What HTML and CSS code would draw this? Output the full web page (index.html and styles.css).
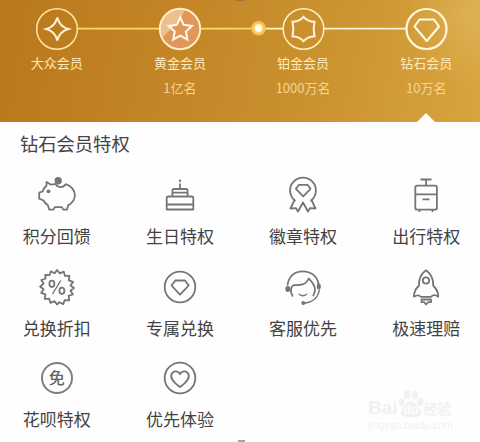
FILE: index.html
```html
<!DOCTYPE html>
<html lang="zh-CN">
<head>
<meta charset="utf-8">
<title>钻石会员特权</title>
<link rel="stylesheet" href="styles.css">
</head>
<body>
<header class="hero">
  <svg class="track" viewBox="0 0 480 52" width="480" height="52" fill="none">
    <path d="M235 0h10" stroke="#8b7142" stroke-width="1.5"/>
    <path d="M78 28.700h81M201 28.700h51" stroke="#ffd866" stroke-width="1.800"/>
    <path d="M265 28.700h18M324 28.700h82" stroke="#fff3cf" stroke-width="1.800"/>
    <circle cx="57" cy="29" r="20.300" stroke="#ffe5a0" stroke-width="1.500"/>
    <path d="M57.300 17.500Q59.600 26.700 68.300 29Q59.600 31.300 57.300 40.500Q55 31.300 46.300 29Q55 26.700 57.300 17.500Z" stroke="#fff4d8" stroke-width="2"/>
    <circle cx="180" cy="29" r="20.300" fill="#e2975a"/>
    <path d="M160 31A20.300 20.300 0 0 1 186 9.500L176 24L163 37Z" fill="#edc08e"/>
    <circle cx="180" cy="29" r="20.200" stroke="#fff0c8" stroke-width="1.900"/>
    <path d="M180.300 17.500l3.400 7.400 8.200 1-6 5.600 1.500 8.100-7.100-4-7.100 4 1.500-8.100-6-5.600 8.200-1Z" stroke="#fff8e8" stroke-width="2.100"/>
    <circle cx="258.500" cy="28.300" r="7.300" fill="#f8c548"/>
    <circle cx="258.500" cy="28.300" r="4.500" fill="#ffe9a5"/>
    <circle cx="258.500" cy="28.300" r="3.200" fill="#fffdf0"/>
    <circle cx="303.500" cy="29" r="20.300" stroke="#fff0c4" stroke-width="1.500"/>
    <path d="M303.500 16.800Q307.500 21.500 314.500 21.800Q312.800 29 314.500 36.200Q307.500 36.500 303.500 41.200Q299.500 36.500 292.500 36.200Q294.200 29 292.500 21.800Q299.500 21.500 303.500 16.800Z" stroke="#fff5db" stroke-width="2"/>
    <circle cx="426.500" cy="29" r="20" stroke="#fff6dc" stroke-width="2.200"/>
    <path d="M419.500 19.500h14.500l5 7-12.200 14.500-12.300-14.500Z" stroke="#fff8e6" stroke-width="2.100" stroke-linejoin="round"/>
  </svg>
  <div class="tiers">
    <div class="tier"><div class="tier-name">大众会员</div></div>
    <div class="tier"><div class="tier-name">黄金会员</div><div class="tier-count">1亿名</div></div>
    <div class="tier"><div class="tier-name">铂金会员</div><div class="tier-count">1000万名</div></div>
    <div class="tier current"><div class="tier-name">钻石会员</div><div class="tier-count">10万名</div></div>
  </div>
</header>
<main>
  <h1>钻石会员特权</h1>
  <div class="grid">
    <div class="perk">
      <svg class="icon" viewBox="0 0 42 42"><path d="M10.500 11.500V8l4.500 2.700c2-.7 3.500-.8 4.800-.5 1.500 3.400 7.100 4.200 9.800 0 5.500 1.400 9.300 6 9.300 11 0 5-3 8-6.800 10.200l-1 4.200h-3.800l-1.500-2.500h-7l-1.500 2.500h-4.100l-1.400-4.500c-1.500-.8-3.300-2.500-4.300-4.600l-4.300-1.800v-6l3.300-1.200c.8-2.300 1.800-3.900 4-6Z"/><circle class="solid" cx="22.200" cy="6.700" r="3.700"/><circle class="solid" cx="12.500" cy="17.300" r="1.900"/></svg>
      <div class="label">积分回馈</div>
    </div>
    <div class="perk">
      <svg class="icon" viewBox="0 0 42 42"><path d="M7.700 35.500V24q0-1.500 1.500-1.500h23.600q1.500 0 1.500 1.500v11.500ZM13.400 22.500v-6q0-1.500 1.500-1.500h12.200q1.500 0 1.500 1.500v6M13.400 18.700h15.200M7.700 30.500h26.600M21 14.800V9.500"/><circle class="solid" cx="21" cy="6.700" r="1.200"/></svg>
      <div class="label">生日特权</div>
    </div>
    <div class="perk">
      <svg class="icon" viewBox="0 0 42 42"><path d="M13.500 27A12.900 12.900 0 1 1 28.500 27M12.500 26l-4 8.500 5.500-.4 2 3.400 5-9 5 9 2-3.400 5.500.4-4-8.500M17 10.800h8.500l3 4-7.300 7.500-7.300-7.500Z"/></svg>
      <div class="label">徽章特权</div>
    </div>
    <div class="perk">
      <svg class="icon" viewBox="0 0 42 42"><rect x="10.300" y="11.700" width="21.600" height="24" rx="2"/><path d="M15.500 5.500h11M21.100 5.500v6M10.300 20.300h21.600M17.500 25.400h7M14.500 36v2M27.500 36v2"/></svg>
      <div class="label">出行特权</div>
    </div>
    <div class="perk">
      <svg class="icon" viewBox="0 0 42 42"><path d="M21 4l2.800 3.400 4-1.700 1.200 4.200h4.500l-.7 4.400 4.200 1.600-2.500 3.600 3.500 2.500-3.500 2.700 2.400 3.800-4.300 1.300.6 4.500-4.500-.2-1.500 4-3.900-1.900L21 38.500l-2.500-3.300-4 1.700-1.300-4.200-4.500.2.700-4.500-4.300-1.500 2.500-3.700-3.500-2.700 3.500-2.700L5.300 14l4.300-1.300-.4-3.800 4.300.2 1.300-3.700 3.900 1.800Z"/><ellipse cx="15.900" cy="17.800" rx="2.500" ry="3.200"/><ellipse cx="25.900" cy="24.800" rx="2.500" ry="3.200"/><path d="M24.800 14.500L16.500 28" class="thin"/></svg>
      <div class="label">兑换折扣</div>
    </div>
    <div class="perk">
      <svg class="icon" viewBox="0 0 42 42"><circle cx="21" cy="21" r="15.300"/><path d="M16.300 14.500h9.700l3.700 5L21 28.700l-8.500-9.200Z"/></svg>
      <div class="label">专属兑换</div>
    </div>
    <div class="perk">
      <svg class="icon" viewBox="0 0 42 42"><path d="M5.500 19.500C6.500 10 13 5.300 20.800 5.300S35.300 10 36.600 18"/><path d="M10.800 30.500C7.500 25 9 20.500 11.500 19.200c5.500 0 11.800.8 15.200-6.700 2.800 3 6.500 6.500 6.300 11.500-.1 2.500-.8 4-2 6"/><path class="thin" d="M16.800 28q4 3.500 8 0M37.500 23.500C36 32 31 36.300 22.500 37.300"/><ellipse class="solid" cx="5.800" cy="23" rx="2.500" ry="3"/><ellipse class="solid" cx="36.800" cy="20.500" rx="2" ry="3"/><circle class="solid" cx="21.300" cy="37" r="2"/></svg>
      <div class="label">客服优先</div>
    </div>
    <div class="perk">
      <svg class="icon" viewBox="0 0 42 42"><path d="M21 4.300c-5.500 4-7.300 9.500-7 15.200-3.800 3.700-5.300 6.500-5 11.200 3-2 4.800-2.200 7 .1h10c2.200-2.300 4.500-2.100 7.200-.1.300-4.700-1.400-7.500-5-11.200.3-5.700-1.700-11.200-7.200-15.200Z"/><circle cx="21" cy="14.500" r="3.200"/><path d="M16.500 33.500h9.500v2.700h-2.800L21 38.500l-1.800-2.300h-2.700Z"/></svg>
      <div class="label">极速理赔</div>
    </div>
    <div class="perk">
      <div class="icon seal">免</div>
      <div class="label">花呗特权</div>
    </div>
    <div class="perk">
      <svg class="icon" viewBox="0 0 42 42"><circle cx="21" cy="21" r="15.300"/><path d="M21 30C10.500 22.500 11.500 18.500 13 16.200c2.300-3 6.500-2.200 8 1 1.500-3.200 5.800-4 8-1 1.500 2.300 2.500 6.300-8 13.800Z"/></svg>
      <div class="label">优先体验</div>
    </div>
  </div>
</main>
<div class="handle"></div>
<div class="watermark">
  <div class="wm-brand"><span class="wm-bai">Bai</span><svg viewBox="0 0 26 28" width="26" height="28"><ellipse cx="3.500" cy="12" rx="3" ry="4"/><ellipse cx="9" cy="5" rx="3.200" ry="4.400"/><ellipse cx="17" cy="5" rx="3.200" ry="4.400"/><ellipse cx="22.500" cy="12" rx="3" ry="4"/><path d="M13 11c4 0 5 4 8 7 5 5 1 9-3 9H8c-4 0-8-4-3-9 3-3 4-7 8-7Z"/><text x="13" y="24" text-anchor="middle">du</text></svg><span class="wm-cn">经验</span></div>
  <div class="wm-url">jingyan.baidu.com</div>
</div>
</body>
</html>
```
FILE: styles.css
```css
* { box-sizing: border-box; }

body {
  margin: 0;
  width: 480px;
  height: 442px;
  overflow: hidden;
  background: #fefefe;
  color: #444244;
  font-family: "Noto Sans CJK SC", sans-serif;
}

.hero {
  height: 122px;
  overflow: hidden;
  background:
    radial-gradient(circle at 100% 12%, rgba(226, 188, 100, 0.6), rgba(226, 188, 100, 0) 75px),
    linear-gradient(100deg, #b9781b 0%, #c28325 30%, #c98f2d 60%, #d19b37 82%, #d8a43d 100%);
}

.track { display: block; }

.tiers {
  display: grid;
  grid-template-columns: repeat(4, 123.200px);
  margin: 0 -4.900px;
  height: 70px;
  text-align: center;
}

.tier { position: relative; }

.tier-name {
  font-size: 13px;
  line-height: 22px;
  color: #ffe9bb;
}

.tier-count {
  margin-top: 3px;
  font-size: 13px;
  line-height: 22px;
  color: #f6d592;
}

.current::after {
  content: "";
  position: absolute;
  left: 50%;
  bottom: 0;
  margin-left: -9px;
  border: solid transparent;
  border-width: 0 9px 9px;
  border-bottom-color: #fefefe;
}

h1 {
  margin: 8px 0 0 20px;
  font-size: 18.300px;
  font-weight: 400;
  line-height: 26px;
}

.grid {
  display: grid;
  grid-template-columns: repeat(4, 123.200px);
  grid-auto-rows: 91.500px;
  margin: 18px -4.900px 0;
}

.perk {
  display: flex;
  flex-direction: column;
  align-items: center;
}

.icon {
  flex: none;
  width: 42px;
  height: 42px;
  fill: none;
  stroke: #777377;
  stroke-width: 1.800;
  stroke-linejoin: round;
}

.icon .thin { stroke-width: 1.400; }
.icon .solid { fill: #777377; stroke: none; }

.seal {
  width: 32px;
  height: 32px;
  margin: 5px 0;
  border: 2px solid #807c80;
  border-radius: 50%;
  color: #686468;
  font-size: 16px;
  font-weight: 500;
  line-height: 27px;
  text-align: center;
}

.label {
  margin-top: 7px;
  font-size: 17px;
  line-height: 26px;
}

.handle {
  position: absolute;
  left: 238px;
  top: 440px;
  width: 7px;
  height: 2px;
  background: #a3a3ab;
}

.watermark {
  position: absolute;
  left: 368px;
  top: 390px;
  width: 96px;
  color: #f1f1f1;
  font-family: "Liberation Sans", sans-serif;
  white-space: nowrap;
}

.wm-brand {
  display: flex;
  align-items: flex-end;
  height: 28px;
  font-weight: 700;
  line-height: 20px;
}

.wm-bai { font-size: 19px; }
.wm-brand svg { flex: none; fill: #f1f1f1; }
.wm-brand text { fill: #fefefe; font-size: 12px; }

.wm-cn {
  font-family: "Noto Sans CJK SC", sans-serif;
  font-size: 14px;
}

.wm-url {
  font-size: 10.500px;
  line-height: 14px;
}
```
